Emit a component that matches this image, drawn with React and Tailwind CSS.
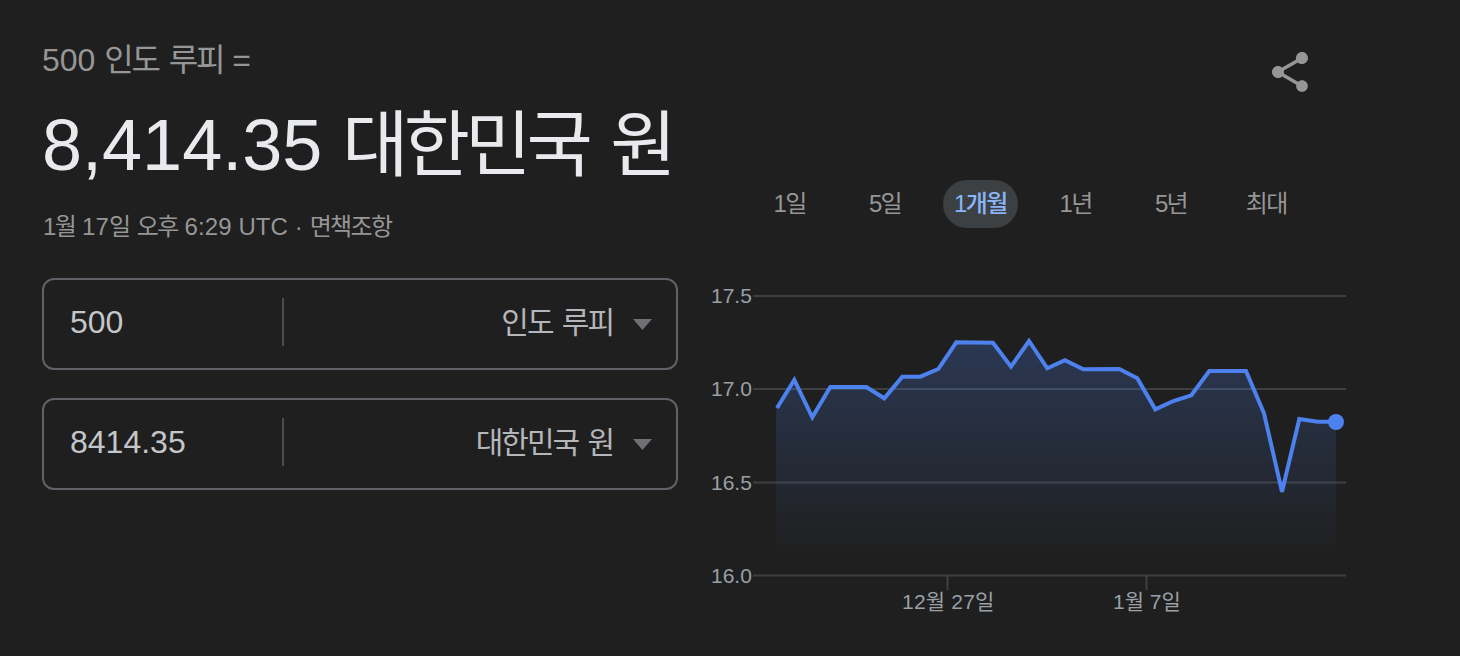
const FONT = "font-['Liberation_Sans','Noto_Sans_CJK_KR',sans-serif]";

function K({ children, bold }) {
  return <span className={bold ? "tracking-[-0.067em] [word-spacing:0.1em] font-medium" : "tracking-[-0.067em] [word-spacing:0.1em]"}>{children}</span>;
}

function Share() {
  return (
    <svg className="w-12 h-12" viewBox="0 0 24 24" fill="#969696">
      <path d="M18 16.08c-.76 0-1.44.3-1.96.77L8.91 12.7c.05-.23.09-.46.09-.7s-.04-.47-.09-.7l7.05-4.11c.54.5 1.25.81 2.04.81 1.66 0 3-1.34 3-3s-1.34-3-3-3-3 1.34-3 3c0 .24.04.47.09.7L8.04 9.81C7.5 9.31 6.79 9 6 9c-1.66 0-3 1.34-3 3s1.34 3 3 3c.79 0 1.5-.31 2.04-.81l7.12 4.16c-.05.21-.08.43-.08.65 0 1.61 1.31 2.92 2.92 2.92 1.61 0 2.92-1.31 2.92-2.92s-1.31-2.92-2.92-2.92z" />
    </svg>
  );
}

function Converter({ value, unit }) {
  return (
    <div className="flex items-center h-[92px] rounded-xl border-2 border-[#5f6368]">
      <div className="w-[240px] h-12 mb-1 pl-[26px] flex items-center border-r-2 border-[#4a4d50] text-[32px] text-[#c4c7ca]"><span>{value}</span></div>
      <div className="flex-1 flex items-center justify-end pr-6 text-[#b4b6b9] text-[30px]">
        <span className="-mt-1"><K>{unit}</K></span>
        <svg className="ml-5 w-[19px] h-[11px]" viewBox="0 0 19 11"><path d="M0 0h19L9.5 11z" fill="#6e7073" /></svg>
      </div>
    </div>
  );
}

const PTS = [[777,408],[794.3,380],[812.3,417.3],[830.3,387],[866.3,387],[884.3,398.3],[902.3,376.7],[920.3,376.7],[938.3,369],[956.3,342.3],[975,342.4],[993,342.7],[1011,366.7],[1029,341],[1047.3,368.3],[1065,360.3],[1083.3,369.3],[1119.3,369],[1137.3,378.3],[1155.3,409.3],[1173.3,401],[1191.3,395.3],[1209.3,371],[1246,371],[1264,413.3],[1282,491.7],[1299.3,419],[1318,421.7],[1336,421.7]];

function Chart() {
  const line = PTS.map(p => p.join(",")).join(" ");
  const area = `${line} 1336,556 776,556 776,408`;
  const grid = [[296, "17.5"], [389, "17.0"], [482.5, "16.5"], [575.5, "16.0"]];
  return (
    <svg width="660" height="350" viewBox="700 270 660 350" className="block">
      <defs>
        <linearGradient id="fade" x1="0" y1="0" x2="0" y2="1">
          <stop offset="0" stopColor="#4d7fe8" stopOpacity="0.26" />
          <stop offset="1" stopColor="#4d7fe8" stopOpacity="0" />
        </linearGradient>
      </defs>
      {grid.map(([y, t]) => (
        <g key={t}>
          <line x1="753" x2="1346" y1={y} y2={y} stroke="#3c4043" strokeWidth="2" />
          <text x="711" y={y + 7} fontSize="21" fill="#9aa0a6">{t}</text>
        </g>
      ))}
      <polygon points={area} fill="url(#fade)" />
      <polyline points={line} fill="none" stroke="#4d82ee" strokeWidth="4" strokeLinejoin="miter" />
      <circle cx="1336" cy="422" r="8" fill="#4d82ee" />
      <line x1="947.5" x2="947.5" y1="576" y2="590" stroke="#3c4043" strokeWidth="2" />
      <line x1="1146.5" x2="1146.5" y1="576" y2="590" stroke="#3c4043" strokeWidth="2" />
      <text x="902" y="609" fontSize="21" letterSpacing="0.2" fill="#9aa0a6">12월 27일</text>
      <text x="1113" y="609" fontSize="21" fill="#9aa0a6">1월 7일</text>
    </svg>
  );
}

const TABS = ["1일", "5일", "1개월", "1년", "5년", "최대"];

export default function App() {
  return (
    <div className={`${FONT} w-[1460px] h-[656px] bg-[#1f1f1f] flex overflow-hidden`}>
      <div className="w-[700px] pl-[42px] pr-[22px] shrink-0 flex flex-col">
        <div className="mt-[40px] h-10 leading-10 text-[32px] text-[#969696] whitespace-nowrap">500 <K>인도 루피</K> =</div>
        <div className="mt-[22px] h-[86px] leading-[86px] text-[72px] text-[#e8eaed] whitespace-nowrap">8,414.35 <K>대한민국 원</K></div>
        <div className="mt-[23px] pl-px h-8 leading-8 text-[24px] tracking-[0.004em] text-[#969696] whitespace-nowrap"><K>1월</K> 17<K>일 오후</K> 6:29 UTC · <K>면책조항</K></div>
        <div className="mt-[35px] flex flex-col gap-7">
          <Converter value="500" unit="인도 루피" />
          <Converter value="8414.35" unit="대한민국 원" />
        </div>
      </div>
      <div className="flex-1 flex flex-col">
        <div className="h-[180px] pt-[48px] pl-[566px]"><Share /></div>
        <div className="ml-[42px] w-[572px] grid grid-cols-6 h-12 text-[24px] text-[#969696]">
          {TABS.map(t => (
            <div key={t} className="flex items-center justify-center">
              <span className={t === "1개월" ? "h-12 w-[75px] flex items-center justify-center rounded-full bg-[#3c4043] text-[#8ab4f8]" : ""}><K bold={t === "1개월"}>{t}</K></span>
            </div>
          ))}
        </div>
        <div className="mt-[42px]"><Chart /></div>
      </div>
    </div>
  );
}
